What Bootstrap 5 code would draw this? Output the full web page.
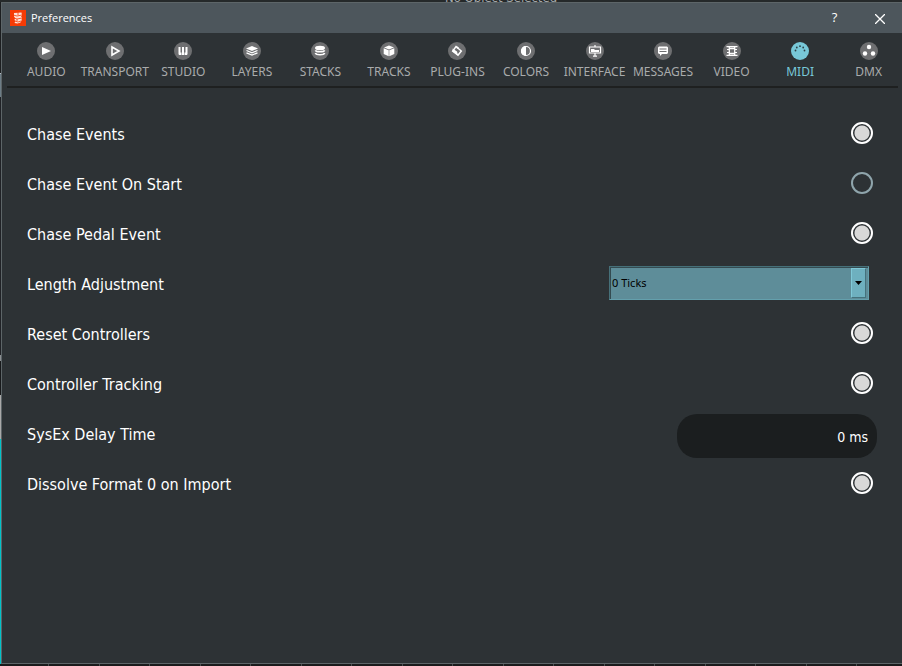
<!DOCTYPE html>
<html lang="en">
<head>
<meta charset="utf-8">
<meta name="viewport" content="width=device-width, initial-scale=1">
<title>Preferences</title>
<link rel="stylesheet" href="https://cdn.jsdelivr.net/npm/bootstrap@5.3.0/dist/css/bootstrap.min.css">
<style>
  body { background: #25292a; color: #fff; font-family: "DejaVu Sans Condensed", "Noto Sans", sans-serif; font-size: 16px; }
  .host-title { height: 2px; font-size: 13px; line-height: 8px; color: #a4a8aa; padding-left: 100px; }
  .host-edge { width: 1px; background: linear-gradient(#1c1e20 71px, #b5bcc4 71px 72px, #6d7d86 72px 95px, #202226 95px 353px, #8b8f92 353px 359px, #17191b 359px 393px, #a9a9a9 393px 437px, #00c3c8 437px); }
  .host-timeline { height: 2px; background: linear-gradient(90deg, #4a4e50 1px, transparent 1px 51px, #4a4e50 51px 52px, transparent 52px) 48px 0 / 101px 2px #1a1b1c; }
  .prefs { background: #2d3235; border: 1px solid #5d6568; border-width: 1px 0 1px 1px; }
  .titlebar { height: 30px; background: #4d565c; padding-left: 8px; font-family: "Open Sans", sans-serif; font-size: 11px; }
  .titlebar span { padding: 0 0 2px 5px; }
  .win-btn { width: 45px; height: 30px; color: #fff; background: none; border: 0; font-size: 13px; }
  .tabs { height: 55px; margin: 0 4px 0 5px; padding: 9px 0 0 5px; border-bottom: 2px solid #1e2020; }
  .tabs button { flex: 1 1 0; min-width: 0; padding: 0; border: 0; background: none; color: #a9abac; font-family: "Noto Sans", sans-serif; font-size: 12px; line-height: 16px; gap: 4px; white-space: nowrap; }
  .tabs button:last-child { margin-right: -5px; }
  .tabs button.active { color: #78c8d8; }
  .tabs svg .disc { fill: #6e6f71; }
  .tabs .active svg .disc { fill: #78c8d8; }
  .settings { padding: 21px 25px 0; }
  .setting { min-height: 50px; }
  .setting label { padding-top: 1px; }
  .toggle { appearance: none; width: 22px; height: 22px; margin: 0 4px 2px 0; border: 2px solid #8fa5ac; border-radius: 11px; }
  .toggle:checked { border-color: #fff; background: radial-gradient(circle, #d8d8d8 7px, transparent 8px); }
  .combo { width: 260px; margin: 0 8px 2px 0; }
  .combo select { appearance: none; height: 34px; padding: 1px 2px 0; color: #000; background: #5e8d99; border: 1px solid #64a0ad; border-top-color: #467079; border-left-color: #467079; border-radius: 0; box-shadow: inset 1px 1px #344b51; font-family: "Noto Sans", sans-serif; font-size: 11px; }
  .combo span { right: 3px; top: 2px; width: 15px; height: 30px; background: #6eb0bf; border: 1px solid #7fc8d7; border-right-color: #45727c; border-bottom-color: #45727c; pointer-events: none; }
  .delay { width: 200px; height: 44px; margin-top: 4px; padding: 2px 9px 0 0; border: 0; border-radius: 20px; background: #1b1e1f; color: #fff; font-size: 14px; }
</style>
</head>
<body class="min-vh-100 d-flex flex-column overflow-hidden">
<div class="host-title overflow-hidden text-center d-flex flex-column justify-content-end">No Object Selected</div>
<div class="d-flex flex-fill">
  <div class="host-edge"></div>
  <div class="prefs flex-fill">
    <header class="titlebar d-flex align-items-center">
      <svg width="16" height="16" viewBox="0 0 16 16" aria-hidden="true"><path fill="#f63b05" d="M0 0h16v16H0z"/><path fill="#ffe2d8" d="m4 3 7.500-.500.5 3-1 1 1 1-.5 3-1 2-3 1-3-.5 1-2-1-1 .5-2-1-1.500z"/><path stroke="#f63b05" stroke-width=".8" fill="none" d="m3 5 4 1 5-1M4 8l3 1 5-1M5 11l3 1 3-1M8 2v3M7 9v2"/></svg>
      <span class="flex-fill lh-1">Preferences</span>
      <button class="win-btn" type="button" aria-label="Help">?</button>
      <button class="win-btn" type="button" aria-label="Close"><svg width="10" height="10" viewBox="0 0 10 10"><path d="m0 0 10 10M10 0 0 10" stroke="#fff" stroke-width="1.3"/></svg></button>
    </header>
    <nav class="tabs d-flex" aria-label="Preference pages">
      <button type="button" class="d-flex flex-column align-items-center"><svg width="18" height="18" viewBox="0 0 18 18"><circle class="disc" cx="9" cy="9" r="9"/><path fill="#fff" d="M5 5l9 4-9 4z"/></svg>AUDIO</button>
      <button type="button" class="d-flex flex-column align-items-center"><svg width="18" height="18" viewBox="0 0 18 18"><circle class="disc" cx="9" cy="9" r="9"/><path fill="none" stroke="#fff" stroke-width="1.6" d="M6 5l7 4-7 4z"/></svg>TRANSPORT</button>
      <button type="button" class="d-flex flex-column align-items-center"><svg width="18" height="18" viewBox="0 0 18 18"><circle class="disc" cx="9" cy="9" r="9"/><path fill="#fff" d="M4.500 5h2v5l.5 1v2H5l-.5-1zM8 5h2v5l.5 1v2h-3v-2l.5-1zM11.500 5h2v7l-.5 1h-2v-2l.5-1z"/></svg>STUDIO</button>
      <button type="button" class="d-flex flex-column align-items-center"><svg width="18" height="18" viewBox="0 0 18 18"><circle class="disc" cx="9" cy="9" r="9"/><path fill="#fff" d="m9 4 6 2.500L9 9 3 6.500z"/><path stroke="#fff" stroke-width="1.300" fill="none" d="m3.500 8.500 5.500 2.300 5.500-2.300M3.500 10.800 9 13l5.500-2.200"/></svg>LAYERS</button>
      <button type="button" class="d-flex flex-column align-items-center"><svg width="18" height="18" viewBox="0 0 18 18"><circle class="disc" cx="9" cy="9" r="9"/><ellipse cx="9" cy="6" rx="5" ry="2.300" fill="#fff"/><path stroke="#fff" stroke-width="1.600" fill="none" d="M4.300 8.300c1 2 8.400 2 9.400 0M4.300 11c1 2.300 8.400 2.300 9.400 0"/></svg>STACKS</button>
      <button type="button" class="d-flex flex-column align-items-center"><svg width="18" height="18" viewBox="0 0 18 18"><circle class="disc" cx="9" cy="9" r="9"/><path fill="#fff" d="m9 3.500 5 2-5 2-5-2zM3.700 6.300l5 2v6l-5-2.300zM14.300 6.300l-5 2v6l5-2.300z"/></svg>TRACKS</button>
      <button type="button" class="d-flex flex-column align-items-center"><svg width="18" height="18" viewBox="0 0 18 18"><circle class="disc" cx="9" cy="9" r="9"/><path fill="none" stroke="#fff" stroke-width="1.500" d="M8 4.500 13.300 9l-3.300 4.300L4.700 9z"/><path fill="#fff" d="m4.700 6.500 4.300 3 1 4-5.500-4zM8 3.800l3 1.700-2 1.500z"/></svg>PLUG-INS</button>
      <button type="button" class="d-flex flex-column align-items-center"><svg width="18" height="18" viewBox="0 0 18 18"><circle class="disc" cx="9" cy="9" r="9"/><circle cx="9" cy="9" r="4.500" fill="none" stroke="#fff" stroke-width="1.200"/><path fill="#fff" d="M9 4a5 5 0 0 0 0 10z"/></svg>COLORS</button>
      <button type="button" class="d-flex flex-column align-items-center"><svg width="18" height="18" viewBox="0 0 18 18"><circle class="disc" cx="9" cy="9" r="9"/><path fill="none" stroke="#fff" stroke-width="1.200" d="M3.500 5h11v6h-11zM9 3v2M9 11v3M7 14.200h4"/><path fill="#fff" d="M5 7h3l1 1h4v2H5z"/></svg>INTERFACE</button>
      <button type="button" class="d-flex flex-column align-items-center"><svg width="18" height="18" viewBox="0 0 18 18"><circle class="disc" cx="9" cy="9" r="9"/><path fill="#fff" d="M5 4.500h8l1 1V11l-1 1H8l-2 2v-2H5l-1-1V5.500z"/><path stroke="#6e6f71" d="M5.500 7h7M5.500 9.500h7"/></svg>MESSAGES</button>
      <button type="button" class="d-flex flex-column align-items-center"><svg width="18" height="18" viewBox="0 0 18 18"><circle class="disc" cx="9" cy="9" r="9"/><path fill="none" stroke="#fff" stroke-width="1.300" d="M3.500 4.700h11M3.500 13.300h11M6.300 4v10M11.700 4v10M6 6.500h6M6 11.500h6"/><path stroke="#fff" d="M4 7.500h2M4 10.500h2M12 7.500h2M12 10.500h2"/></svg>VIDEO</button>
      <button type="button" class="active d-flex flex-column align-items-center" aria-current="page"><svg width="18" height="18" viewBox="0 0 18 18"><circle class="disc" cx="9" cy="9" r="9"/><g fill="#2d4248"><circle cx="4.500" cy="8.500" r=".9"/><circle cx="5.800" cy="5.500" r=".9"/><circle cx="9" cy="4.200" r=".9"/><circle cx="12.200" cy="5.500" r=".9"/><circle cx="13.500" cy="8.500" r=".9"/></g></svg>MIDI</button>
      <button type="button" class="d-flex flex-column align-items-center"><svg width="18" height="18" viewBox="0 0 18 18"><circle class="disc" cx="9" cy="9" r="9"/><g fill="#fff"><circle cx="9" cy="5" r="2.200"/><circle cx="5" cy="11.500" r="2.200"/><circle cx="13" cy="11.500" r="2.200"/></g></svg>DMX</button>
    </nav>
    <main class="settings">
      <div class="setting d-flex justify-content-between align-items-center"><label for="chase">Chase Events</label><input class="toggle" type="checkbox" id="chase" checked></div>
      <div class="setting d-flex justify-content-between align-items-center"><label for="start">Chase Event On Start</label><input class="toggle" type="checkbox" id="start"></div>
      <div class="setting d-flex justify-content-between align-items-center"><label for="pedal">Chase Pedal Event</label><input class="toggle" type="checkbox" id="pedal" checked></div>
      <div class="setting d-flex justify-content-between align-items-center"><label for="length">Length Adjustment</label>
        <div class="combo position-relative"><select class="w-100 d-block" id="length"><option>0 Ticks</option></select><span class="position-absolute d-flex align-items-center justify-content-center"><svg width="7" height="4" viewBox="0 0 7 4"><path d="M0 0h7L3.500 4z"/></svg></span></div></div>
      <div class="setting d-flex justify-content-between align-items-center"><label for="reset">Reset Controllers</label><input class="toggle" type="checkbox" id="reset" checked></div>
      <div class="setting d-flex justify-content-between align-items-center"><label for="tracking">Controller Tracking</label><input class="toggle" type="checkbox" id="tracking" checked></div>
      <div class="setting d-flex justify-content-between align-items-center"><label for="delay">SysEx Delay Time</label><input class="delay text-end" type="text" id="delay" value="0 ms"></div>
      <div class="setting d-flex justify-content-between align-items-center"><label for="dissolve">Dissolve Format 0 on Import</label><input class="toggle" type="checkbox" id="dissolve" checked></div>
    </main>
  </div>
</div>
<div class="host-timeline"></div>
<script src="https://cdn.jsdelivr.net/npm/bootstrap@5.3.0/dist/js/bootstrap.bundle.min.js"></script>
</body>
</html>
